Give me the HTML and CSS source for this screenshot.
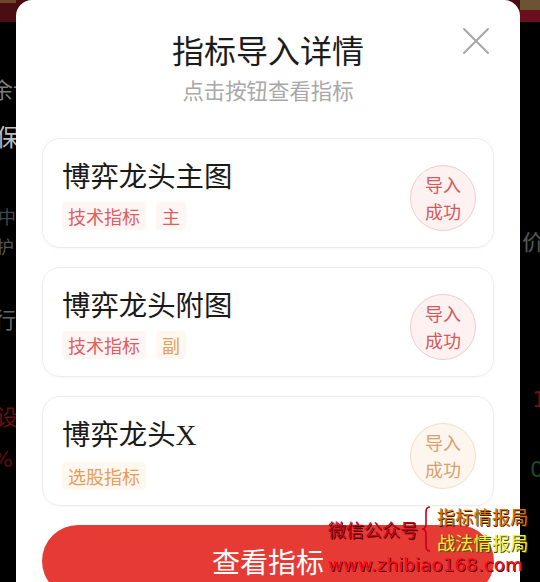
FILE: index.html
```html
<!DOCTYPE html>
<html lang="zh-CN">
<head>
<meta charset="utf-8">
<title>指标导入详情</title>
<link rel="stylesheet" href="styles.css">
</head>
<body>
<div class="screen">
  <aside class="bg-col bg-left">
    <div class="band band-left"></div>
    <span class="frag fl1">余访</span>
    <span class="frag fl2">保</span>
    <span class="frag fl3">中目</span>
    <span class="frag fl4">护</span>
    <span class="frag fl5">行业</span>
    <span class="frag fl6">设</span>
    <span class="frag fl7">%</span>
  </aside>

  <section class="modal">
    <header class="modal-head">
      <h1 class="modal-title">指标导入详情</h1>
      <p class="modal-sub">点击按钮查看指标</p>
      <button class="close" aria-label="关闭">
        <svg width="28" height="28" viewBox="0 0 28 28"><path d="M2 2 L26 26 M26 2 L2 26" stroke="#a6a6a6" stroke-width="2" fill="none" stroke-linecap="round"/></svg>
      </button>
    </header>

    <div class="list">
      <div class="card">
        <div class="card-main">
          <div class="card-title">博弈龙头主图</div>
          <div class="tags">
            <span class="tag tag-red">技术指标</span>
            <span class="tag tag-red">主</span>
          </div>
        </div>
        <div class="badge badge-red"><span>导入</span><span>成功</span></div>
      </div>

      <div class="card">
        <div class="card-main">
          <div class="card-title">博弈龙头附图</div>
          <div class="tags">
            <span class="tag tag-red">技术指标</span>
            <span class="tag tag-orange">副</span>
          </div>
        </div>
        <div class="badge badge-red"><span>导入</span><span>成功</span></div>
      </div>

      <div class="card">
        <div class="card-main">
          <div class="card-title">博弈龙头<span class="latin">X</span></div>
          <div class="tags">
            <span class="tag tag-orange">选股指标</span>
          </div>
        </div>
        <div class="badge badge-orange"><span>导入</span><span>成功</span></div>
      </div>

      <button class="cta">查看指标</button>
    </div>
  </section>

  <aside class="bg-col bg-right">
    <div class="band band-right"></div>
    <span class="frag fr1">价</span>
    <span class="frag fr2">1</span>
    <span class="frag fr3">0</span>
  </aside>

  <div class="watermark">
    <div class="wm-row">
      <span class="wm-label">微信公众号</span>
      <svg class="wm-brace" width="14" height="48" viewBox="0 0 14 48"><path d="M10 2 Q6 2 6 7 L6 19 Q6 24 2 24 Q6 24 6 29 L6 41 Q6 46 10 46" stroke="#c8001a" stroke-width="1.6" fill="none"/></svg>
      <div class="wm-names">
        <span class="wm-n1">指标情报局</span>
        <span class="wm-n2">战法情报局</span>
      </div>
    </div>
    <div class="wm-url">www.zhibiao168.com</div>
  </div>
</div>
</body>
</html>
```

FILE: styles.css
```css
* { box-sizing: border-box; }

html, body {
  margin: 0;
  padding: 0;
  background: #000;
}

body {
  font-family: "Noto Sans CJK SC", "Noto Sans", sans-serif;
}

.screen {
  position: relative;
  width: 540px;
  height: 582px;
  overflow: hidden;
  display: grid;
  grid-template-columns: 16px 504px 20px;
  background: linear-gradient(to bottom, #4a0d12 0, #4a0d12 22px, #000 22px);
}

/* background page fragments */
.bg-col {
  display: flex;
  flex-direction: column;
  overflow: hidden;
  white-space: nowrap;
}

.band { height: 22px; flex: none; }
.band-left { background: linear-gradient(to bottom, #6b4a2e 0, #6b4a2e 3px, #4a0d12 3px); }
.band-right { background: linear-gradient(to bottom, #6b5433 0, #6b5433 10px, #6a0f1e 10px); }

.frag {
  display: block;
  flex: none;
  font-size: 22px;
  line-height: 28px;
}

.fl1 { margin-top: 52px; margin-left: -9px; color: #7c7c7c; }
.fl2 { margin-top: 20px; margin-left: -4px; color: #bdbdbd; font-size: 24px; }
.fl3 { margin-top: 54px; margin-left: -2px; color: #474747; font-size: 18px; line-height: 24px; }
.fl4 { margin-top: 6px; margin-left: -4px; color: #555; font-size: 18px; line-height: 24px; }
.fl5 { margin-top: 46px; margin-left: -6px; color: #666; }
.fl6 { margin-top: 69px; margin-left: -4px; color: #6e0d0d; }
.fl7 { margin-top: 17px; margin-left: -8px; color: #5e0b0b; font-family: "DejaVu Sans", sans-serif; }

.fr1 { margin-top: 204px; margin-left: 2px; color: #585858; }
.fr2 { margin-top: 132px; margin-left: 12px; color: #7d0a0a; font-family: "DejaVu Sans", sans-serif; }
.fr3 { margin-top: 42px; margin-left: 10px; color: #1f4a1f; font-family: "DejaVu Sans", sans-serif; }

/* modal */
.modal {
  background: #fff;
  border-radius: 16px 16px 0 0;
  padding: 0 26px;
  height: 582px;
}

.modal-head {
  position: relative;
  padding-top: 29px;
  text-align: center;
}

.modal-title {
  margin: 0;
  font-size: 32px;
  line-height: 40px;
  font-weight: 400;
  color: #1c1c1c;
}

.modal-sub {
  margin: 7px 0 0;
  font-size: 21.4px;
  line-height: 28px;
  color: #a8a8a8;
}

.close {
  position: absolute;
  top: 27px;
  right: 4px;
  width: 28px;
  height: 28px;
  padding: 0;
  border: 0;
  background: none;
  display: flex;
}

.list {
  margin-top: 34px;
  display: flex;
  flex-direction: column;
  gap: 19px;
}

.card {
  height: 110px;
  border: 1px solid #ececec;
  border-radius: 18px;
  display: flex;
  justify-content: space-between;
  align-items: center;
  padding: 0 17px 0 19px;
  box-shadow: 0 1px 3px rgba(0, 0, 0, 0.03);
}

.card-main {
  align-self: flex-start;
  padding-top: 18px;
}

.card-title {
  font-size: 28.4px;
  line-height: 36px;
  color: #1a1a1a;
}

.latin {
  font-family: "Liberation Serif", serif;
  font-size: 29px;
}

.tags {
  margin-top: 9px;
  display: flex;
  gap: 10px;
}

.tag {
  font-size: 18px;
  line-height: 28px;
  padding: 0 6px;
  border-radius: 4px;
}

.tag-red { color: #e05d5d; background: #fef5f5; }
.tag-orange { color: #e69d58; background: #fef8f1; }

.badge {
  width: 66px;
  height: 66px;
  margin-top: 10px;
  border-radius: 50%;
  display: flex;
  flex-direction: column;
  align-items: center;
  justify-content: center;
  font-size: 18px;
  line-height: 27px;
}

.badge-red { color: #d35a5a; background: #fdf1f1; border: 1.5px solid #f0cdcd; }
.badge-orange { color: #d9a06c; background: #fdf6ee; border: 1.5px solid #f3ddc8; }

.cta {
  height: 72px;
  width: 100%;
  border: 0;
  border-radius: 36px;
  background: #e63b35;
  color: #fff;
  font-family: "Noto Sans CJK SC", sans-serif;
  font-size: 28px;
  letter-spacing: 0;
}

/* watermark overlay */
.watermark {
  position: absolute;
  left: 328px;
  top: 503px;
  display: flex;
  flex-direction: column;
}

.wm-row {
  display: flex;
  align-items: center;
}

.wm-label {
  font-size: 18px;
  line-height: 26px;
  color: #c8001a;
  text-shadow: 1px 1px 0 #3a0000;
}

.wm-brace { margin: 0 3px 0 2px; }

.wm-names {
  display: flex;
  flex-direction: column;
}

.wm-n1, .wm-n2 {
  font-size: 18px;
  line-height: 26px;
  letter-spacing: 0.3px;
}

.wm-n1 { color: #d97300; text-shadow: 1px 1px 0 #3a1a00; }
.wm-n2 { color: #f2f03a; text-shadow: 1px 1px 0 #4a4a00; }

.wm-url {
  font-family: "DejaVu Sans", sans-serif;
  font-size: 18px;
  line-height: 20px;
  color: #ff0a1e;
  text-shadow: 1px 1px 0 #3a0000;
  letter-spacing: 0.2px;
}
```
